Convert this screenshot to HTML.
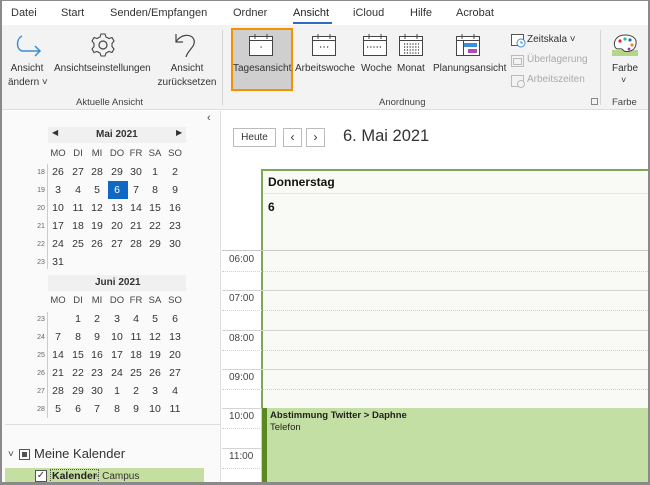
<!DOCTYPE html>
<html><head><meta charset="utf-8">
<style>
*{margin:0;padding:0;box-sizing:border-box}
body{width:650px;height:485px;overflow:hidden;font-family:"Liberation Sans",sans-serif;background:#fff;position:relative;color:#333}
.a{position:absolute;white-space:nowrap}
.frame{position:absolute;left:0;top:0;width:650px;height:485px;border:2px solid #8a8a8a;border-top-width:1px;border-bottom-width:3px;pointer-events:none;z-index:50}
.tab{font-size:11px;top:7px;color:#333}
.lbl{font-size:10px;color:#333;text-align:center}
.gl{font-size:9.5px;color:#444}
.d{font-size:10.5px;color:#333;width:18px;text-align:center}
.wk{font-size:7px;color:#666;width:12px;text-align:center}
.wd{font-size:9.5px;color:#444;width:18px;text-align:center}
.hr{font-size:10px;color:#444;left:229px}
.dl{left:222px;width:426px;height:0;border-top:1px dotted #d0d0d0}
</style></head><body>
<div class="frame"></div>
<div class="a" style="left:0;top:0;width:650px;height:25px;background:#fff"></div>
<div class="a tab" style="left:11px">Datei</div>
<div class="a tab" style="left:61px">Start</div>
<div class="a tab" style="left:110px">Senden/Empfangen</div>
<div class="a tab" style="left:233px">Ordner</div>
<div class="a tab" style="left:293px;color:#222">Ansicht</div>
<div class="a" style="left:293px;top:22px;width:39px;height:2px;background:#2b6cc4"></div>
<div class="a tab" style="left:353px">iCloud</div>
<div class="a tab" style="left:410px">Hilfe</div>
<div class="a tab" style="left:456px">Acrobat</div>
<div class="a" style="left:0;top:25px;width:650px;height:85px;background:#f3f3f3;border-bottom:1px solid #dedede"></div>
<svg class="a" style="left:14px;top:33px" width="30" height="28" viewBox="0 0 30 28"><path d="M8 3 C2 6 2 16 8 18 L26 18 M21 13 L26 18 L21 23" fill="none" stroke="#3a8fd6" stroke-width="1.5"/></svg>
<div class="a lbl" style="left:8px;top:62px;width:38px;line-height:14px">Ansicht<br>ändern ˅</div>
<svg class="a" style="left:90px;top:32px" width="26" height="26" viewBox="0 0 26 26"><circle cx="13" cy="13" r="4" fill="none" stroke="#444" stroke-width="1.2"/><path d="M11 2h4l1 3 3 1.5 3-1 2 3.5-2 2.5v3l2 2.5-2 3.5-3-1-3 1.5-1 3h-4l-1-3-3-1.5-3 1-2-3.5 2-2.5v-3l-2-2.5 2-3.5 3 1 3-1.5z" fill="none" stroke="#444" stroke-width="1.1"/></svg>
<div class="a lbl" style="left:54px;top:63px">Ansichtseinstellungen</div>
<svg class="a" style="left:172px;top:30px" width="28" height="28" viewBox="0 0 28 28"><path d="M4 12 C8 4 20 3 22 10 C24 16 16 20 14 27 M4 4 L4 12 L11 12" fill="none" stroke="#444" stroke-width="1.2"/></svg>
<div class="a lbl" style="left:156px;top:62px;width:62px;line-height:14px">Ansicht<br>zurücksetzen</div>
<div class="a gl" style="left:76px;top:97px">Aktuelle Ansicht</div>
<div class="a" style="left:222px;top:30px;width:1px;height:75px;background:#d6d6d6"></div>
<div class="a" style="left:231px;top:28px;width:62px;height:63px;background:#cfcfcf;border:2px solid #f39200"></div>
<svg class="a" style="left:248px;top:33px" width="26" height="24" viewBox="0 0 26 24"><rect x="1.5" y="3.5" width="23" height="19" fill="#fff" stroke="#444"/><line x1="1.5" y1="7.5" x2="24.5" y2="7.5" stroke="#444"/><path d="M7 1v5M19 1v5" stroke="#444"/><rect x="12.5" y="13.5" width="1.2" height="1.2" fill="#333"/></svg>
<div class="a lbl" style="left:233px;top:63px">Tagesansicht</div>
<svg class="a" style="left:311px;top:33px" width="26" height="24" viewBox="0 0 26 24"><rect x="1.5" y="3.5" width="23" height="19" fill="#fff" stroke="#444"/><line x1="1.5" y1="7.5" x2="24.5" y2="7.5" stroke="#444"/><path d="M7 1v5M19 1v5" stroke="#444"/><path d="M9 14h1.2M12.5 14h1.2M16 14h1.2" stroke="#333" stroke-width="1.2"/></svg>
<div class="a lbl" style="left:295px;top:63px">Arbeitswoche</div>
<svg class="a" style="left:362px;top:33px" width="26" height="24" viewBox="0 0 26 24"><rect x="1.5" y="3.5" width="23" height="19" fill="#fff" stroke="#444"/><line x1="1.5" y1="7.5" x2="24.5" y2="7.5" stroke="#444"/><path d="M7 1v5M19 1v5" stroke="#444"/><path d="M5 14h16" stroke="#333" stroke-width="1.2" stroke-dasharray="1.2 2"/></svg>
<div class="a lbl" style="left:361px;top:63px">Woche</div>
<svg class="a" style="left:398px;top:33px" width="26" height="24" viewBox="0 0 26 24"><rect x="1.5" y="3.5" width="23" height="19" fill="#fff" stroke="#444"/><line x1="1.5" y1="7.5" x2="24.5" y2="7.5" stroke="#444"/><path d="M7 1v5M19 1v5" stroke="#444"/><path d="M6 11h15M6 14h15M6 17h15M6 20h15" stroke="#333" stroke-width="1.2" stroke-dasharray="1.2 1.6"/></svg>
<div class="a lbl" style="left:397px;top:63px">Monat</div>
<svg class="a" style="left:455px;top:33px" width="26" height="24" viewBox="0 0 26 24"><rect x="1.5" y="3.5" width="23" height="19" fill="#fff" stroke="#444"/><line x1="1.5" y1="7.5" x2="24.5" y2="7.5" stroke="#444"/><path d="M7 1v5M19 1v5" stroke="#444"/><line x1="8.5" y1="8" x2="8.5" y2="22" stroke="#444"/><rect x="9" y="10" width="13" height="4" fill="#3a8fd6"/><rect x="13" y="16" width="9" height="4" fill="#b648b6"/></svg>
<div class="a lbl" style="left:433px;top:63px">Planungsansicht</div>
<svg class="a" style="left:510px;top:32px" width="16" height="16" viewBox="0 0 16 16"><rect x="1.5" y="2.5" width="12" height="11" fill="#fff" stroke="#555"/><circle cx="11" cy="11" r="4" fill="#fff" stroke="#3a8fd6"/><path d="M11 9v2h2" stroke="#3a8fd6" fill="none"/></svg>
<div class="a lbl" style="left:527px;top:34px">Zeitskala ˅</div>
<svg class="a" style="left:510px;top:53px" width="16" height="16" viewBox="0 0 16 16"><rect x="1.5" y="2.5" width="12" height="11" fill="none" stroke="#bbb"/><rect x="3.5" y="5.5" width="8" height="6" fill="none" stroke="#bbb"/></svg>
<div class="a lbl" style="left:527px;top:54px;color:#aaa">Überlagerung</div>
<svg class="a" style="left:510px;top:73px" width="16" height="16" viewBox="0 0 16 16"><rect x="1.5" y="2.5" width="12" height="11" fill="none" stroke="#bbb"/><circle cx="11" cy="11" r="3.5" fill="#f3f3f3" stroke="#bbb"/></svg>
<div class="a lbl" style="left:527px;top:74px;color:#aaa">Arbeitszeiten</div>
<div class="a gl" style="left:379px;top:97px">Anordnung</div>
<div class="a" style="left:591px;top:98px;width:7px;height:7px;border:1px solid #888"></div>
<div class="a" style="left:600px;top:30px;width:1px;height:75px;background:#d6d6d6"></div>
<svg class="a" style="left:611px;top:32px" width="28" height="26" viewBox="0 0 28 26"><rect x="1" y="18" width="26" height="6" fill="#b5d58a"/><path d="M14 3 C5 3 2 10 4 15 C6 19 10 15 12 18 C14 21 24 20 25 12 C26 6 21 3 14 3Z" fill="#fff" stroke="#444"/><circle cx="9" cy="9" r="1.6" fill="#e23"/><circle cx="14" cy="7" r="1.6" fill="#3b9"/><circle cx="19" cy="8" r="1.6" fill="#36c"/><circle cx="21" cy="13" r="1.6" fill="#e83"/><circle cx="18" cy="17" r="1.4" fill="#a3a"/></svg>
<div class="a lbl" style="left:612px;top:63px">Farbe</div>
<div class="a lbl" style="left:621px;top:75px;font-size:9px">˅</div>
<div class="a gl" style="left:612px;top:97px">Farbe</div>
<div class="a" style="left:2px;top:111px;width:218px;height:374px;background:#fafafa"></div>
<div class="a" style="left:220px;top:111px;width:1px;height:374px;background:#e0e0e0"></div>
<div class="a" style="left:207px;top:112px;font-size:11px;color:#444">‹</div>
<div class="a" style="left:48px;top:127px;width:138px;height:16px;background:#f0f0f0"></div>
<div class="a" style="left:52px;top:128px;font-size:8px;color:#333">◀</div>
<div class="a" style="left:176px;top:128px;font-size:8px;color:#333">▶</div>
<div class="a" style="left:96px;top:129px;font-size:10px;font-weight:bold;color:#333">Mai 2021</div>
<div class="a" style="left:48px;top:275px;width:138px;height:16px;background:#f0f0f0"></div>
<div class="a" style="left:95px;top:277px;font-size:10px;font-weight:bold;color:#333">Juni 2021</div>
<div class="a" style="left:47px;top:164px;width:1px;height:105px;background:#ccc"></div>
<div class="a" style="left:47px;top:312px;width:1px;height:106px;background:#ccc"></div>
<div class="a" style="left:108px;top:181px;width:20px;height:18px;background:#1068c4"></div>
<div class="a" style="left:5px;top:424px;width:215px;height:1px;background:#ddd"></div>
<div id="cal"></div>
<div class="a" style="left:8px;top:449px;font-size:10px;color:#444">˅</div>
<div class="a" style="left:19px;top:449px;width:11px;height:11px;border:1px solid #555;background:#fff"><div style="margin:2px;width:5px;height:5px;background:#555"></div></div>
<div class="a" style="left:34px;top:446px;font-size:13px;color:#333">Meine Kalender</div>
<div class="a" style="left:5px;top:468px;width:199px;height:17px;background:#c4df9f"></div>
<div class="a" style="left:35px;top:470px;width:12px;height:12px;border:1px solid #555;background:#fff;font-size:10px;line-height:10px;text-align:center">✓</div>
<div class="a" style="left:50px;top:469px;font-size:10.5px;font-weight:bold;color:#222;border:1px dotted #555;padding:0 1px">Kalender</div>
<div class="a" style="left:96px;top:471px;font-size:10px;color:#333">- Campus</div>
<div class="a" style="left:233px;top:128px;width:43px;height:19px;border:1px solid #bbb;font-size:10px;text-align:center;line-height:17px;color:#333">Heute</div>
<div class="a" style="left:283px;top:128px;width:19px;height:19px;border:1px solid #bbb;font-size:12px;text-align:center;line-height:16px">‹</div>
<div class="a" style="left:306px;top:128px;width:19px;height:19px;border:1px solid #bbb;font-size:12px;text-align:center;line-height:16px">›</div>
<div class="a" style="left:343px;top:127px;font-size:16.5px;color:#333">6. Mai 2021</div>
<div class="a" style="left:261px;top:169px;width:387px;height:316px;background:#f9faf6;border-left:2px solid #7ea756;border-top:2px solid #7ea756"></div>
<div class="a" style="left:268px;top:175px;font-size:12px;font-weight:bold;color:#111">Donnerstag</div>
<div class="a" style="left:263px;top:193px;width:385px;height:1px;background:#e8e8e2"></div>
<div class="a" style="left:268px;top:200px;font-size:12px;font-weight:bold;color:#111">6</div>
<div class="a" style="left:222px;top:250px;width:426px;height:1px;background:#c8c8c8"></div>
<div id="hrs"></div>
<div class="a" style="left:261px;top:408px;width:387px;height:77px;background:#c4dfa3"></div>
<div class="a" style="left:262px;top:408px;width:5px;height:77px;background:#5a8a1f"></div>
<div class="a" style="left:270px;top:410px;font-size:9.5px;font-weight:bold;color:#222">Abstimmung Twitter &gt; Daphne</div>
<div class="a" style="left:270px;top:422px;font-size:9.5px;color:#222">Telefon</div>
<script>
var h='';var xs=[58,78,97,117,136,155,175];
function row(y,arr,wk){h+='<div class="a wk" style="left:35px;top:'+(y+3)+'px">'+wk+'</div>';arr.forEach(function(v,i){if(v!=='')h+='<div class="a d" style="left:'+(xs[i]-9)+'px;top:'+y+'px;'+(y==184&&v==6?'color:#fff':'')+'">'+v+'</div>'})}
['MO','DI','MI','DO','FR','SA','SO'].forEach(function(v,i){h+='<div class="a wd" style="left:'+(xs[i]-9)+'px;top:148px">'+v+'</div><div class="a wd" style="left:'+(xs[i]-9)+'px;top:295px">'+v+'</div>'});
var m=[[26,27,28,29,30,1,2],[3,4,5,6,7,8,9],[10,11,12,13,14,15,16],[17,18,19,20,21,22,23],[24,25,26,27,28,29,30],[31,'','','','','','']];
m.forEach(function(r,i){row(166+i*18,r,18+i)});
var j=[['',1,2,3,4,5,6],[7,8,9,10,11,12,13],[14,15,16,17,18,19,20],[21,22,23,24,25,26,27],[28,29,30,1,2,3,4],[5,6,7,8,9,10,11]];
j.forEach(function(r,i){row(313+i*18,r,23+i)});
document.getElementById('cal').outerHTML=h;
var g='';['06:00','07:00','08:00','09:00','10:00','11:00'].forEach(function(t,i){var y=251+i*39.3;g+='<div class="a hr" style="top:'+(y+3)+'px">'+t+'</div><div class="a dl" style="top:'+(y+20)+'px"></div>';if(i>0)g+='<div class="a" style="left:222px;width:426px;height:1px;background:#d4d4d4;top:'+y+'px"></div>'});
document.getElementById('hrs').outerHTML=g;
</script>
</body></html>
